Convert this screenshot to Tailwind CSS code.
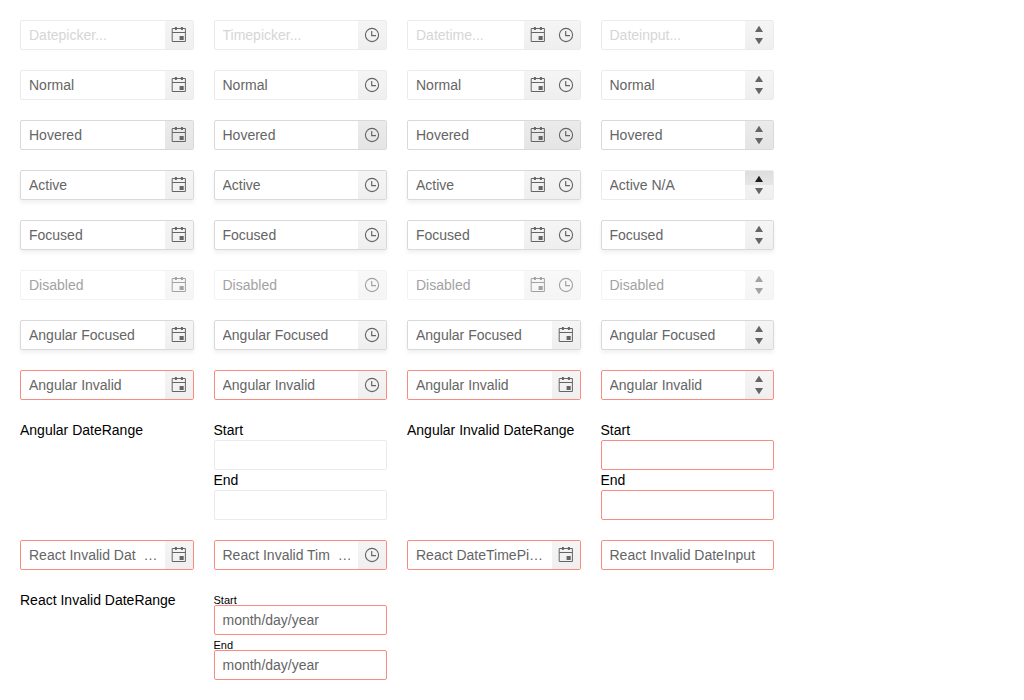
<!DOCTYPE html>
<html lang="en">
<head>
<meta charset="utf-8">
<meta name="viewport" content="width=device-width, initial-scale=1">
<title>Date inputs</title>
<script src="https://cdn.jsdelivr.net/npm/@tailwindcss/browser@4"></script>
</head>
<body class="bg-white p-5 font-['Liberation_Sans',Arial,sans-serif] text-sm leading-5 text-black">
<svg class="hidden" aria-hidden="true">
  <symbol id="calendar" viewBox="0 0 16 16">
    <path fill="none" stroke="currentColor" d="M1.2 1.5h13.2v13H1.2zM1.2 5.5h13.2"/>
    <path fill="currentColor" d="M3.9 0h2v3h-2zM9.9 0h2v3h-2zM8.6 9h4.1v4H8.6z"/>
  </symbol>
  <symbol id="clock" viewBox="0 0 16 16">
    <circle cx="8" cy="8" r="6.6" fill="none" stroke="currentColor" stroke-width="1.1"/>
    <path fill="none" stroke="currentColor" stroke-width="1.2" d="M7.7 4v4.6H12"/>
  </symbol>
  <symbol id="up" viewBox="0 0 8 6"><path fill="currentColor" d="M3.8 0h.4L8 6H0z"/></symbol>
  <symbol id="down" viewBox="0 0 8 6"><path fill="currentColor" d="M3.8 6h.4L8 0H0z"/></symbol>
</svg>
<main id="grid" class="grid w-full max-w-[754px] grid-cols-4 items-start gap-5"></main>
<script>
const frames = {
  normal: 'border-[#ebebeb]',
  hovered: 'border-[#d9d9d9]',
  focused: 'border-[#d9d9d9] shadow-[0_3px_4px_rgba(0,0,0,0.06)]',
  disabled: 'border-[#ebebeb] opacity-60',
  invalid: 'border-[#f98b80]'
};
const fills = {
  hovered: 'from-[#ebebeb] to-[#e5e5e5]',
  other: 'from-[#f5f5f5] to-[#efefef]'
};
const names = { calendar: 'Open calendar', clock: 'Open time list' };

function iconButton(icon, off) {
  return `<button type="button" aria-label="${names[icon]}" ${off} class="flex w-7 items-center justify-center"><svg class="size-4"><use href="#${icon}"/></svg></button>`;
}

function spinner(off, pressed) {
  const top = pressed ? 'bg-linear-to-b from-[#dedede] to-[#e6e6e6] text-[#1f1f1f]' : '';
  return `<span class="flex w-7 flex-col">
    <button type="button" aria-label="Increase" ${off} class="flex flex-1 items-end justify-center pb-[3px] ${top}"><svg class="h-1.5 w-2"><use href="#up"/></svg></button>
    <button type="button" aria-label="Decrease" ${off} class="flex flex-1 items-start justify-center pt-[3px]"><svg class="h-1.5 w-2"><use href="#down"/></svg></button>
  </span>`;
}

function field({ state = 'normal', value = '', placeholder = '', tools = [], id = '', pressed = false }) {
  const off = state === 'disabled' ? 'disabled' : '';
  const label = id ? `id="${id}"` : `aria-label="${value || placeholder}"`;
  const inner = tools.map(t => t === 'spin' ? spinner(off, pressed) : iconButton(t, off)).join('');
  const addon = inner ? `<span class="flex shrink-0 bg-linear-to-b ${fills[state] || fills.other}">${inner}</span>` : '';
  return `<div class="flex h-[30px] overflow-hidden rounded-[2px] border bg-white text-[#656565] ${frames[state]}">
    <input type="text" ${label} value="${value}" placeholder="${placeholder}" ${off} class="min-w-0 flex-1 px-2 outline-none placeholder:text-[#d6d6d6]">${addon}</div>`;
}

function range(prefix, state, small) {
  const labelClass = small ? 'block pt-[5px] text-[11px] leading-[10px]' : 'block';
  return '<div>' + ['Start', 'End'].map(n =>
    `<label for="${prefix}${n}" class="${labelClass}">${n}</label>` +
    field({ id: prefix + n, state, value: small ? 'month/day/year' : '' })).join('') + '</div>';
}

const kinds = [['calendar'], ['clock'], ['calendar', 'clock'], ['spin']];
const single = [['calendar'], ['clock'], ['calendar'], ['spin']];
const cells = [];
['Datepicker...', 'Timepicker...', 'Datetime...', 'Dateinput...'].forEach((placeholder, i) =>
  cells.push(field({ placeholder, tools: kinds[i] })));
[
  ['Normal', 'normal', kinds], ['Hovered', 'hovered', kinds], ['Active', 'focused', kinds],
  ['Focused', 'focused', kinds], ['Disabled', 'disabled', kinds],
  ['Angular Focused', 'focused', single], ['Angular Invalid', 'invalid', single]
].forEach(([value, state, set]) => set.forEach((tools, i) => {
  const pressed = value === 'Active' && i === 3;
  cells.push(field(pressed ? { value: 'Active N/A', tools, pressed } : { value, state, tools }));
}));
cells.push(
  '<p>Angular DateRange</p>', range('ng', 'normal', false),
  '<p class="whitespace-nowrap">Angular Invalid DateRange</p>', range('ngInvalid', 'invalid', false),
  field({ value: 'React Invalid Dat\u00a0\u00a0…', state: 'invalid', tools: ['calendar'] }),
  field({ value: 'React Invalid Tim\u00a0\u00a0…', state: 'invalid', tools: ['clock'] }),
  field({ value: 'React DateTimePi…', state: 'invalid', tools: ['calendar'] }),
  field({ value: 'React Invalid DateInput', state: 'invalid' }),
  '<p>React Invalid DateRange</p>', range('react', 'invalid', true)
);
document.getElementById('grid').innerHTML = cells.join('');
</script>
</body>
</html>
